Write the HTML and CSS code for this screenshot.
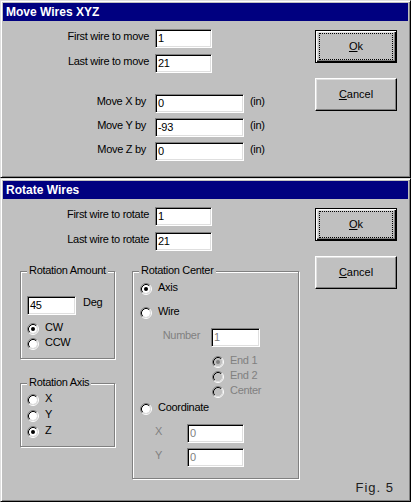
FILE: index.html
```html
<!DOCTYPE html>
<html>
<head>
<meta charset="utf-8">
<link rel="stylesheet" href="styles.css">
</head>
<body>
<svg class="defs" width="0" height="0">
  <symbol id="r-off" viewBox="0 0 12 12">
    <path d="M2.11 9.89A5.5 5.5 0 0 1 9.89 2.11" fill="none" stroke="#808080"/>
    <path d="M9.89 2.11A5.5 5.5 0 0 1 2.11 9.89" fill="none" stroke="#fff"/>
    <circle cx="6" cy="6" r="4" fill="#fff"/>
    <path d="M2.82 9.18A4.5 4.5 0 0 1 9.18 2.82" fill="none" stroke="#000"/>
    <path d="M9.18 2.82A4.5 4.5 0 0 1 2.82 9.18" fill="none" stroke="#dfdfdf"/>
  </symbol>
  <symbol id="r-on" viewBox="0 0 12 12">
    <path d="M2.11 9.89A5.5 5.5 0 0 1 9.89 2.11" fill="none" stroke="#808080"/>
    <path d="M9.89 2.11A5.5 5.5 0 0 1 2.11 9.89" fill="none" stroke="#fff"/>
    <circle cx="6" cy="6" r="4" fill="#fff"/>
    <path d="M2.82 9.18A4.5 4.5 0 0 1 9.18 2.82" fill="none" stroke="#000"/>
    <path d="M9.18 2.82A4.5 4.5 0 0 1 2.82 9.18" fill="none" stroke="#dfdfdf"/>
    <circle cx="6" cy="6" r="2" fill="#000"/>
  </symbol>
  <symbol id="r-dis-off" viewBox="0 0 12 12">
    <path d="M2.11 9.89A5.5 5.5 0 0 1 9.89 2.11" fill="none" stroke="#808080"/>
    <path d="M9.89 2.11A5.5 5.5 0 0 1 2.11 9.89" fill="none" stroke="#fff"/>
    <circle cx="6" cy="6" r="4" fill="#c0c0c0"/>
    <path d="M2.82 9.18A4.5 4.5 0 0 1 9.18 2.82" fill="none" stroke="#000"/>
    <path d="M9.18 2.82A4.5 4.5 0 0 1 2.82 9.18" fill="none" stroke="#dfdfdf"/>
  </symbol>
  <symbol id="r-dis-on" viewBox="0 0 12 12">
    <path d="M2.11 9.89A5.5 5.5 0 0 1 9.89 2.11" fill="none" stroke="#808080"/>
    <path d="M9.89 2.11A5.5 5.5 0 0 1 2.11 9.89" fill="none" stroke="#fff"/>
    <circle cx="6" cy="6" r="4" fill="#c0c0c0"/>
    <path d="M2.82 9.18A4.5 4.5 0 0 1 9.18 2.82" fill="none" stroke="#000"/>
    <path d="M9.18 2.82A4.5 4.5 0 0 1 2.82 9.18" fill="none" stroke="#dfdfdf"/>
    <circle cx="6" cy="6" r="2" fill="#808080"/>
  </symbol>
</svg>

<div class="dialog d1">
  <div class="titlebar">Move Wires XYZ</div>
  <div class="body">
    <div class="main">
      <div class="form wires">
        <span class="lbl">First wire to move</span><div class="edit w57">1</div>
        <span class="lbl">Last wire to move</span><div class="edit w57">21</div>
      </div>
      <div class="form moves">
        <span class="lbl">Move X by</span><div class="edit w89">0</div><span class="unit">(in)</span>
        <span class="lbl">Move Y by</span><div class="edit w89">-93</div><span class="unit">(in)</span>
        <span class="lbl">Move Z by</span><div class="edit w89">0</div><span class="unit">(in)</span>
      </div>
    </div>
    <div class="buttons">
      <div class="btn default"><span><u>O</u>k</span></div>
      <div class="btn"><span><u>C</u>ancel</span></div>
    </div>
  </div>
</div>

<div class="dialog d2">
  <div class="titlebar">Rotate Wires</div>
  <div class="body">
    <div class="main">
      <div class="form wires">
        <span class="lbl">First wire to rotate</span><div class="edit w57">1</div>
        <span class="lbl">Last wire to rotate</span><div class="edit w57">21</div>
      </div>
      <div class="groups">
        <div class="gcol">
          <div class="group amount">
            <span class="gtitle">Rotation Amount</span>
            <div class="amount-row"><div class="edit w49">45</div><span class="deg">Deg</span></div>
            <div class="radio first-cw"><svg width="12" height="12"><use href="#r-on"/></svg><span>CW</span></div>
            <div class="radio"><svg width="12" height="12"><use href="#r-off"/></svg><span>CCW</span></div>
          </div>
          <div class="group axis">
            <span class="gtitle">Rotation Axis</span>
            <div class="radio r16"><svg width="12" height="12"><use href="#r-off"/></svg><span>X</span></div>
            <div class="radio r16"><svg width="12" height="12"><use href="#r-off"/></svg><span>Y</span></div>
            <div class="radio r16"><svg width="12" height="12"><use href="#r-on"/></svg><span>Z</span></div>
          </div>
        </div>
        <div class="group center">
          <span class="gtitle">Rotation Center</span>
          <div class="radio"><svg width="12" height="12"><use href="#r-on"/></svg><span>Axis</span></div>
          <div class="radio wire"><svg width="12" height="12"><use href="#r-off"/></svg><span>Wire</span></div>
          <div class="num-row"><span class="lbl dis num-lbl">Number</span><div class="edit w49 dis">1</div></div>
          <div class="radio dis end1"><svg width="12" height="12"><use href="#r-dis-on"/></svg><span>End 1</span></div>
          <div class="radio dis sub"><svg width="12" height="12"><use href="#r-dis-off"/></svg><span>End 2</span></div>
          <div class="radio dis sub"><svg width="12" height="12"><use href="#r-dis-off"/></svg><span>Center</span></div>
          <div class="radio coord"><svg width="12" height="12"><use href="#r-off"/></svg><span>Coordinate</span></div>
          <div class="xy-row first-xy"><span class="lbl dis xy-lbl">X</span><div class="edit w57 dis">0</div></div>
          <div class="xy-row"><span class="lbl dis xy-lbl">Y</span><div class="edit w57 dis">0</div></div>
        </div>
      </div>
    </div>
    <div class="buttons">
      <div class="btn default"><span><u>O</u>k</span></div>
      <div class="btn"><span><u>C</u>ancel</span></div>
      <div class="fig">Fig. 5</div>
    </div>
  </div>
</div>
</body>
</html>
```

FILE: styles.css
```css
* { box-sizing: border-box; }
html, body { margin: 0; padding: 0; }
body {
  width: 411px;
  height: 502px;
  overflow: hidden;
  background: #c0c0c0;
  font-family: "Liberation Sans", Arial, sans-serif;
  font-size: 11px;
  letter-spacing: -0.3px;
  color: #000;
}
.defs { display: none; }

.dialog {
  display: flex;
  flex-direction: column;
  background: #c0c0c0;
  border: 1px solid;
  border-color: #dfdfdf #000 #000 #dfdfdf;
  box-shadow: inset 1px 1px #fff, inset -1px -1px #808080;
  padding: 2px;
}
.d1 { height: 178px; }
.d2 { height: 324px; }

.titlebar {
  height: 18px;
  flex: none;
  background: #000080;
  color: #fff;
  font-weight: bold;
  font-size: 12px;
  letter-spacing: 0;
  line-height: 18px;
  padding-left: 3px;
  white-space: nowrap;
}

.body { flex: 1; display: flex; }
.main { flex: 1; display: flex; flex-direction: column; }

.form {
  display: grid;
  grid-auto-rows: 19px;
  column-gap: 6px;
  align-items: start;
}
.wires {
  margin-top: 8px;
  grid-template-columns: 146px 57px;
  row-gap: 6px;
}
.moves {
  margin-top: 21px;
  grid-template-columns: 146px 89px auto;
  row-gap: 5px;
}
.moves .lbl { padding-right: 3px; }

.lbl {
  text-align: right;
  line-height: 13px;
  margin-top: 1px;
  white-space: nowrap;
}
.unit { line-height: 13px; margin-top: 1px; }

.edit {
  height: 19px;
  border: 1px solid;
  border-color: #808080 #fff #fff #808080;
  box-shadow: inset 1px 1px #000, inset -1px -1px #dfdfdf;
  background: #fff;
  padding: 2px 0 0 2px;
  line-height: 13px;
  white-space: nowrap;
  overflow: hidden;
}
.w49 { width: 49px; }
.w57 { width: 57px; }
.w89 { width: 89px; }
.edit.dis { color: #808080; }
.dis { color: #808080; }

.buttons {
  width: 82px;
  flex: none;
  margin-right: 11px;
  padding-top: 9px;
  display: flex;
  flex-direction: column;
  gap: 15px;
}
.btn {
  position: relative;
  height: 33px;
  display: flex;
  align-items: center;
  justify-content: center;
  border: 1px solid;
  border-color: #fff #000 #000 #fff;
  box-shadow: inset -1px -1px #808080, inset 1px 1px #dfdfdf;
  line-height: 13px;
  letter-spacing: 0;
}
.btn.default {
  border-color: #000;
  box-shadow: inset 1px 1px #fff, inset -1px -1px #000, inset -2px -2px #808080, inset 2px 2px #dfdfdf;
}
.btn.default::after {
  content: "";
  position: absolute;
  left: 3px;
  top: 2px;
  right: 3px;
  bottom: 2px;
  border: 1px dotted #000;
}
.btn u { text-underline-offset: 1px; }

.fig {
  margin-top: auto;
  margin-bottom: 4px;
  text-align: right;
  padding-right: 3px;
  font-size: 13px;
  line-height: 15px;
  letter-spacing: 1px;
  color: #202020;
}

.groups {
  margin-top: 20px;
  padding-left: 17px;
  display: flex;
  align-items: flex-start;
  gap: 17px;
}
.gcol { display: flex; flex-direction: column; }

.group {
  position: relative;
  border: 1px solid #808080;
  box-shadow: inset 1px 1px #fff, 1px 1px #fff;
  display: flex;
  flex-direction: column;
}
.gtitle {
  position: absolute;
  top: -8px;
  left: 6px;
  padding: 0 2px;
  background: #c0c0c0;
  line-height: 13px;
  white-space: nowrap;
}

.amount { width: 95px; height: 88px; padding: 24px 0 0 6px; }
.amount-row { display: flex; align-items: flex-start; height: 19px; }
.deg { margin-left: 7px; line-height: 13px; }
.first-cw { margin-top: 6px; }

.axis { width: 95px; height: 64px; margin-top: 24px; padding: 8px 0 0 6px; }

.radio {
  display: flex;
  align-items: flex-start;
  height: 15px;
  line-height: 13px;
  white-space: nowrap;
}
.radio svg { margin-top: 2px; margin-right: 6px; flex: none; }
.radio.r16 { height: 16px; }

.center { width: 167px; height: 208px; padding: 9px 0 0 7px; }
.wire { margin-top: 9px; }
.num-row { margin-top: 8px; display: flex; height: 19px; align-items: flex-start; }
.num-lbl { width: 60px; margin-right: 11px; }
.end1 { margin-top: 7px; margin-left: 72px; }
.sub { margin-left: 72px; }
.coord { margin-top: 2px; }
.xy-row { display: flex; align-items: flex-start; height: 19px; margin-top: 5px; padding-left: 15px; }
.first-xy { margin-top: 8px; }
.xy-lbl { width: 32px; text-align: left; margin-top: 1px; }
```
